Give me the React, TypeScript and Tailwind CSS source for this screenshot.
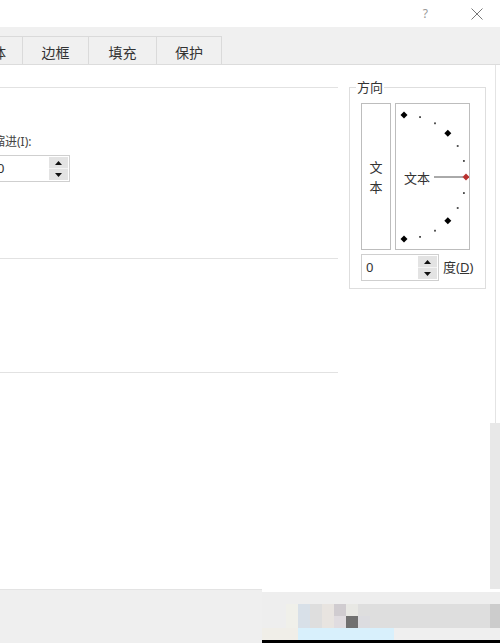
import React from 'react';

const FONT = "font-['Noto_Sans','Noto_Sans_CJK_SC',sans-serif]";

const TABS = [
  { label: '字体', cls: 'ml-[-38px] w-[61px]' },
  { label: '边框', cls: 'w-[66px]' },
  { label: '填充', cls: 'w-[68px]' },
  { label: '保护', cls: 'w-[65px]' },
];

const ROW_A = [
  'w-[24px] bg-[#eeeeee]',
  'w-[12px] bg-[#f0f0ea]',
  'w-[12px] bg-[#d8e0e8]',
  'w-[12px] bg-[#dedede]',
  'w-[12px] bg-[#e8e4e0]',
  'w-[12px] bg-[#d0ccd0]',
  'w-[12px] bg-[#e8e8e4]',
  'w-[132px] bg-[#dedede]',
  'w-[10px] bg-[#cccccc]',
];

const ROW_B = [
  'w-[24px] bg-[#eeeeee]',
  'w-[12px] bg-[#f0f0ea]',
  'w-[12px] bg-[#d8e0e8]',
  'w-[12px] bg-[#dedede]',
  'w-[12px] bg-[#e8e4e0]',
  'w-[12px] bg-[#e0dce0]',
  'w-[12px] bg-[#707070]',
  'w-[12px] bg-[#dcdce0]',
  'w-[120px] bg-[#dedede]',
  'w-[10px] bg-[#cccccc]',
];

const ROW_C = ['w-[36px] bg-[#f0eee8]', 'w-[96px] bg-[#d8f0fc]', 'w-[106px] bg-[#efefef]'];

function Spinner() {
  return (
    <div className="flex flex-col w-[20px] h-full py-[1px] pr-[1px]">
      <div className="flex-1 flex items-center justify-center bg-[#e3e3e3] border-b border-[#f4f4f4]">
        <svg width="7" height="4" viewBox="0 0 7 4">
          <polygon points="3.5,0 7,4 0,4" fill="#111" />
        </svg>
      </div>
      <div className="flex-1 flex items-center justify-center bg-[#e3e3e3]">
        <svg width="7" height="4" viewBox="0 0 7 4">
          <polygon points="0,0 7,0 3.5,4" fill="#111" />
        </svg>
      </div>
    </div>
  );
}

function SpinBox({ className }: { className: string }) {
  return (
    <div className={`h-[27px] flex bg-white border border-[#cfcfcf] ${className}`}>
      <div className="flex-1 flex items-center pl-[4px] text-[13px] text-[#333]">0</div>
      <Spinner />
    </div>
  );
}

function Dial() {
  const cx = 8;
  const cy = 73;
  const r = 62;
  const marks = [];
  for (let a = -90; a <= 90; a += 15) {
    const rad = (a * Math.PI) / 180;
    const x = cx + r * Math.cos(rad);
    const y = cy - r * Math.sin(rad);
    if (a === 0) continue;
    if (Math.abs(a) === 90 || Math.abs(a) === 45) {
      marks.push(
        <polygon
          key={a}
          points={`${x},${y - 3.5} ${x + 3.5},${y} ${x},${y + 3.5} ${x - 3.5},${y}`}
          fill="#000"
        />
      );
    } else {
      marks.push(<rect key={a} x={x - 0.9} y={y - 0.9} width="1.8" height="1.8" fill="#444" />);
    }
  }
  return (
    <svg width="73" height="145" viewBox="0 0 73 145">
      {marks}
      <text x="8" y="79" fontSize="13" fill="#333" fontFamily="Noto Sans CJK SC, sans-serif">
        文本
      </text>
      <line x1="38" y1="73" x2="67" y2="73" stroke="#555" strokeWidth="1" />
      <polygon points="70,69.5 73.5,73 70,76.5 66.5,73" fill="#b8312f" />
    </svg>
  );
}

export default function App() {
  return (
    <div className={`w-[500px] h-[643px] flex flex-col overflow-hidden bg-white text-[#333] ${FONT}`}>
      {/* title bar */}
      <div className="h-[27px] flex items-center justify-end bg-white">
        <span className="text-[12px] text-[#999] leading-none mr-[43px]">?</span>
        <svg width="12" height="12" viewBox="0 0 12 12" className="mr-[17px]">
          <path d="M0.5 0.5 L11.5 11.5 M11.5 0.5 L0.5 11.5" stroke="#777" strokeWidth="1" />
        </svg>
      </div>

      {/* tabs */}
      <div className="h-[37px] flex items-end bg-[#f0f0f0]">
        {TABS.map(t => (
          <div
            key={t.label}
            className={`h-[28px] shrink-0 flex items-center justify-center pt-[3px] border-t border-r border-[#dadada] text-[14px] ${t.cls}`}
          >
            {t.label}
          </div>
        ))}
      </div>

      {/* content */}
      <div className="h-[525px] flex border-t border-[#dcdcdc] bg-white">
        <div className="w-[338px] shrink-0 flex flex-col">
          <div className="mt-[22px] h-px bg-[#e2e2e2]" />
          <div className="mt-[46px] ml-[-7px] text-[12px] leading-[16px] text-[#444]">缩进(I):</div>
          <SpinBox className="mt-[5px] ml-[-8px] w-[78px]" />
          <div className="mt-[76px] h-px bg-[#e2e2e2]" />
          <div className="mt-[113px] h-px bg-[#e2e2e2]" />
        </div>

        <fieldset className="ml-[11px] mt-[14px] w-[137px] self-start border border-[#dedede] pl-[11px] pt-[8px] pb-[7px]">
          <legend className="ml-[-5px] px-[1px] text-[13px] leading-[16px]">方向</legend>
          <div className="flex gap-[4px]">
            <div className="w-[30px] h-[147px] border border-[#bdbdbd] flex flex-col items-center justify-center text-[13px] leading-[20px]">
              <span>文</span>
              <span>本</span>
            </div>
            <div className="w-[75px] h-[147px] border border-[#bdbdbd]">
              <Dial />
            </div>
          </div>
          <div className="mt-[4px] flex items-center">
            <SpinBox className="w-[78px]" />
            <span className="ml-[4px] text-[13px]">
              度(<span className="underline">D</span>)
            </span>
          </div>
        </fieldset>

        <div className="ml-auto w-[10px] flex flex-col">
          <div className="h-[358px] ml-[5px] border-l border-[#e4e4e4]" />
          <div className="flex-1 bg-[#e8e8e8]" />
        </div>
      </div>

      {/* bottom */}
      <div className="h-[54px] flex">
        <div className="w-[262px] bg-[#efefef] border-t border-[#e3e3e3]" />
        <div className="flex-1 flex flex-col">
          <div className="h-[3px] bg-white" />
          <div className="h-[12px] bg-[#eeeeee]" />
          <div className="h-[12px] flex">
            {ROW_A.map((c, i) => (
              <div key={i} className={c} />
            ))}
          </div>
          <div className="h-[12px] flex">
            {ROW_B.map((c, i) => (
              <div key={i} className={c} />
            ))}
          </div>
          <div className="h-[12px] flex">
            {ROW_C.map((c, i) => (
              <div key={i} className={c} />
            ))}
          </div>
          <div className="h-[3px] bg-black" />
        </div>
      </div>
    </div>
  );
}
